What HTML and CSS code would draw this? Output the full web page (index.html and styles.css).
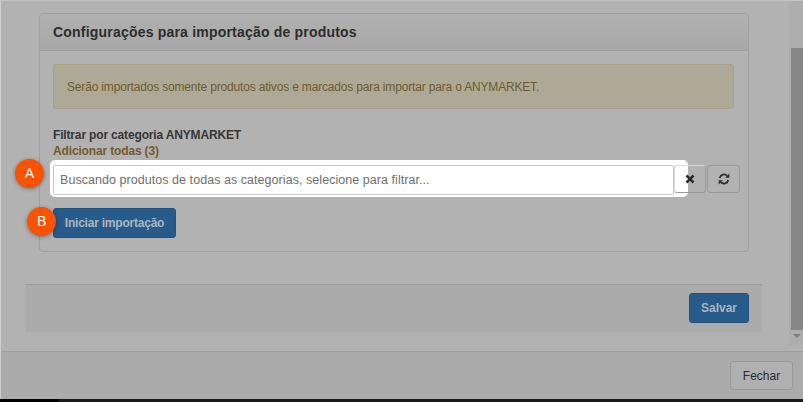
FILE: index.html
```html
<!DOCTYPE html>
<html>
<head>
    <title>Importação de produtos</title>
    <link rel="stylesheet" href="styles.css">
</head>
<body>
    <div class="modal">
        <div class="modal-body">
            <div class="content">
                <div class="panel">
                    <div class="panel-heading">Configurações para importação de produtos</div>
                    <div class="panel-body">
                        <div class="alert">Serão importados somente produtos ativos e marcados para importar para o ANYMARKET.</div>
                        <div class="filter-label">Filtrar por categoria ANYMARKET</div>
                        <a class="add-all">Adicionar todas (3)</a>
                        <div class="filter-row">
                            <span class="highlight"></span>
                            <span class="badge badge-a">A</span>
                            <div class="fake-input">Buscando produtos de todas as categorias, selecione para filtrar...</div>
                            <button class="btn-icon btn-clear">
                                <svg width="10" height="10" viewBox="0 0 10 10"><path d="M2.4 .6 5 3.2 7.6 .6 9.4 2.4 6.8 5 9.4 7.6 7.6 9.4 5 6.8 2.4 9.4 .6 7.6 3.2 5 .6 2.4Z" fill="#2b2b2b"/></svg>
                            </button>
                            <button class="btn-icon btn-refresh">
                                <svg width="12" height="12" viewBox="0 0 12 12"><path d="M1.7 5A4.4 4.4 0 0 1 9.2 2.8" fill="none" stroke="#2b2b2b" stroke-width="1.7"/><path d="M11.3 .6V4.7H7.2Z" fill="#2b2b2b"/><path d="M10.3 7A4.4 4.4 0 0 1 2.8 9.2" fill="none" stroke="#2b2b2b" stroke-width="1.7"/><path d="M.7 11.4V7.3H4.8Z" fill="#2b2b2b"/></svg>
                            </button>
                        </div>
                        <div class="start-row">
                            <span class="badge badge-b">B</span>
                            <button class="btn-primary btn-start">Iniciar importação</button>
                        </div>
                    </div>
                </div>
                <div class="save-bar">
                    <button class="btn-primary btn-save">Salvar</button>
                </div>
            </div>
            <div class="scrollbar">
                <div class="scroll-thumb"></div>
                <div class="scroll-arrow"></div>
            </div>
        </div>
        <div class="modal-footer">
            <button class="btn-close">Fechar</button>
        </div>
    </div>
    <div class="taskbar"><span class="taskbar-start"></span></div>
</body>
</html>
```

FILE: styles.css
```css
* { box-sizing: border-box; }
html, body { margin: 0; height: 402px; overflow: hidden; }
body { font-family: "Liberation Sans", Arial, sans-serif; font-size: 12px; color: #2b2b2b; background: #b2b2b2; }
button { font-family: inherit; padding: 0; cursor: pointer; }

.modal {
    height: 399px;
    display: flex;
    flex-direction: column;
    border-left: 1px solid #cfcfcf;
    border-top: 1px solid #c4c4c4;
}
.modal-body { height: 350px; display: flex; }
.content { flex: none; width: 788px; padding: 12px 27px 0 24px; }

.panel {
    margin-left: 14px;
    margin-right: 13px;
    height: 239px;
    border: 1px solid #a0a0a0;
    border-radius: 4px;
}
.panel-heading {
    height: 37px;
    padding: 10px 13px 0;
    font-size: 14px;
    font-weight: bold;
    line-height: 17px;
    letter-spacing: .2px;
    color: #2c2c2c;
    background: linear-gradient(#b0b0b0, #a8a8a8);
    border-bottom: 1px solid #9f9f9f;
    border-radius: 3px 3px 0 0;
}
.panel-body { padding: 13px 14px 0 13px; }
.alert {
    height: 45px;
    padding: 15px 13px 0;
    line-height: 14px;
    letter-spacing: -.17px;
    color: #6f5a2e;
    background: #aea997;
    border: 1px solid #aba183;
    border-radius: 3px;
}
.filter-label { margin-top: 19px; line-height: 15px; font-weight: bold; letter-spacing: -.16px; color: #363636; }
.add-all { display: block; margin-top: 1px; font-weight: bold; line-height: 14px; letter-spacing: -.15px; color: #735a2d; }

.filter-row { position: relative; display: flex; align-items: flex-start; margin-top: 7px; }
.highlight {
    position: absolute;
    left: -3px;
    top: -5px;
    width: 638px;
    height: 37px;
    background: #fff;
    border-radius: 5px;
    z-index: 1;
}
.fake-input {
    position: relative;
    z-index: 2;
    flex: none;
    width: 621px;
    height: 30px;
    padding: 0 6px;
    font-size: 12.5px;
    letter-spacing: .05px;
    line-height: 28px;
    color: #6e6e6e;
    background: #fff;
    border: 1px solid #c8c8c8;
    border-radius: 2px;
}
.btn-icon {
    flex: none;
    height: 28px;
    display: flex;
    align-items: center;
    justify-content: center;
    background: transparent;
    border: 1px solid #9a9a9a;
    border-radius: 3px;
}
.btn-clear { width: 32px; position: relative; z-index: 3; border-color: #d8d8d8 #9a9a9a #9a9a9a #d8d8d8; }
.btn-refresh { width: 33px; margin-left: 1px; }

.start-row { position: relative; margin-top: 13px; }
.btn-primary {
    color: #aab6c2;
    font-size: 12px;
    font-weight: bold;
    background: #265b8a;
    border: 1px solid #235380;
    border-radius: 3px;
}
.btn-start { width: 123px; height: 30px; letter-spacing: -.22px; }

.badge {
    position: absolute;
    width: 29px;
    height: 29px;
    text-align: center;
    line-height: 26px;
    font-family: "Open Sans", sans-serif;
    font-size: 15px;
    color: #fff;
    background: #f95200;
    border-radius: 50%;
    box-shadow: 0 1px 4px rgba(0, 0, 0, .35);
    z-index: 4;
}
.badge-a { left: -38px; top: -6px; }
.badge-b { left: -26px; top: -1px; }

.save-bar {
    display: flex;
    justify-content: flex-end;
    height: 48px;
    margin-top: 32px;
    padding: 8px 13px 0 0;
    background: #ababab;
    border-top: 1px solid #9c9c9c;
}
.btn-save { width: 60px; height: 30px; }

.scrollbar { flex: none; width: 14px; height: 345px; padding-left: 2px; background: #adadad; }
.scroll-thumb { height: 282px; margin-top: 47px; background: #868686; }
.scroll-arrow {
    width: 0;
    margin: 4px 0 0 2px;
    border-left: 4px solid transparent;
    border-right: 4px solid transparent;
    border-top: 4px solid #7f7f7f;
}

.modal-footer {
    flex: 1;
    display: flex;
    justify-content: flex-end;
    padding: 9px 10px 0 0;
    background: #ababab;
    border-top: 1px solid #9c9c9c;
}
.btn-close {
    width: 63px;
    height: 29px;
    font-size: 12px;
    color: #2b2b2b;
    background: #b0b0b0;
    border: 1px solid #999;
    border-radius: 3px;
}

.taskbar { height: 3px; background: #1a1a1a; }
.taskbar-start { display: block; width: 59px; height: 3px; background: #000; }
```
